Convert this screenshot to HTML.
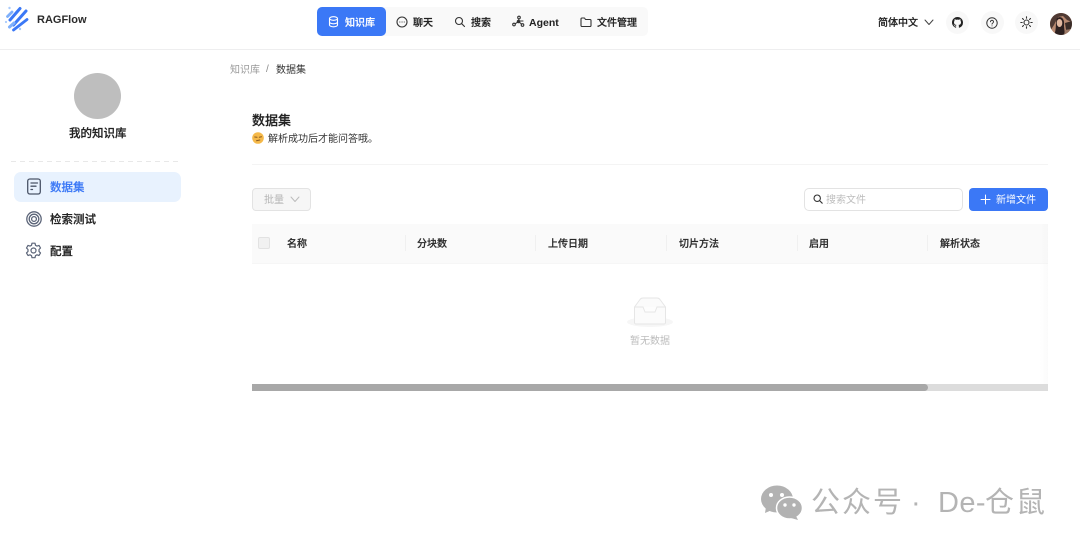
<!DOCTYPE html>
<html lang="zh"><head><meta charset="utf-8"><title>RAGFlow</title>
<style>
html,body{margin:0;padding:0;background:#fff}
#p{position:relative;width:1080px;height:547px;overflow:hidden;background:#fff;font-family:"Liberation Sans","Noto Sans CJK SC",sans-serif;color:#222}
#p div,#p span.t,#p svg{position:absolute}
.t{position:absolute;white-space:nowrap;line-height:16px}
.b{font-weight:500;-webkit-text-stroke:.2px currentColor}
.th{font-size:10px;top:237px;color:#2a2a2a;font-weight:500;-webkit-text-stroke:.2px currentColor}
.sep{width:1px;height:16px;top:235px;background:#f0f0f0}
.circ{width:23px;height:23px;border-radius:50%;background:#f8f8f8;top:11px}
.i{fill:none;stroke:#333;stroke-width:1.100;stroke-linecap:round;stroke-linejoin:round}
.w{font-size:29px;line-height:34px;color:#b4b4b4;top:486px}
</style></head><body><div id="p">

<div style="left:0;top:49px;width:1080px;height:1px;background:#eeeeef"></div>

<svg style="left:0;top:0" width="34" height="34" viewBox="0 0 34 34" fill="none" stroke-linecap="round">
<path d="M20 8.500 10 20" stroke="#3b78f6" stroke-width="3"/>
<path d="M26 11 13.500 25" stroke="#3b78f6" stroke-width="3"/>
<path d="M27 19.500 13.500 30" stroke="#3b78f6" stroke-width="2.800"/>
<path d="M14 23 9.500 27" stroke="#7fb0fb" stroke-width="3"/>
<path d="M12 12 7.500 16.500" stroke="#7fb0fb" stroke-width="2.800"/>
<circle cx="9.500" cy="8" r="1.200" fill="#a9cbfc"/><circle cx="6" cy="22" r="1.100" fill="#a9cbfc"/><circle cx="20" cy="29" r="1.200" fill="#a9cbfc"/>
</svg>
<span class="t" style="left:37px;top:12px;font-size:11px;font-weight:700;color:#2b2b2b">RAGFlow</span>

<div style="left:317px;top:7px;width:331px;height:29px;background:#f9f9f9;border-radius:5px"></div>
<div style="left:317px;top:7px;width:69px;height:29px;background:#3b78f6;border-radius:5px"></div>
<svg class="i" style="left:328px;top:16px;stroke:#fff" width="11" height="12" viewBox="0 0 11 12"><ellipse cx="5.500" cy="2.500" rx="4" ry="1.800"/><path d="M1.500 2.500v6.500c0 1 1.800 1.800 4 1.800s4-.8 4-1.800v-6.500M1.500 6c0 1 1.800 1.800 4 1.800s4-.8 4-1.800"/></svg>
<span class="t b" style="left:345px;top:14px;font-size:10px;color:#fff;margin-top:1.500px">知识库</span>
<svg class="i" style="left:396px;top:16px" width="12" height="12" viewBox="0 0 12 12"><circle cx="6" cy="6" r="5"/><path d="M3.800 6h.1M6 6h.1M8.200 6h.1"/></svg>
<span class="t b" style="left:413px;top:14px;font-size:10px;margin-top:1.500px">聊天</span>
<svg class="i" style="left:454px;top:16px" width="12" height="12" viewBox="0 0 12 12"><circle cx="5" cy="5" r="3.500"/><path d="M7.700 7.700 10.500 10.500"/></svg>
<span class="t b" style="left:471px;top:14px;font-size:10px;margin-top:1.500px">搜索</span>
<svg class="i" style="left:512px;top:15px" width="13" height="13" viewBox="0 0 13 13"><circle cx="7" cy="2.500" r="1.300"/><circle cx="2" cy="9.500" r="1.300"/><circle cx="10.500" cy="10" r="1.300"/><circle cx="6.500" cy="6.500" r="1.200" fill="#333"/><path d="M6.800 4v1.500M3.200 8.700 5.500 7.300M7.700 7.500 9.500 9M8 6h3"/></svg>
<span class="t" style="left:529px;top:15px;font-size:10.500px;font-weight:700">Agent</span>
<svg class="i" style="left:580px;top:16px" width="12" height="12" viewBox="0 0 12 12"><path d="M1 3a1 1 0 0 1 1-1h2.500l1 1.500H10a1 1 0 0 1 1 1V9.500a1 1 0 0 1-1 1H2a1 1 0 0 1-1-1z"/></svg>
<span class="t b" style="left:597px;top:14px;font-size:10px;margin-top:1.500px">文件管理</span>

<span class="t b" style="left:878px;top:16px;font-size:10px">简体中文</span>
<svg class="i" style="left:924px;top:19px;stroke:#444;stroke-width:1" width="10" height="7" viewBox="0 0 10 7"><path d="M1 1 5 5.500 9 1"/></svg>
<div class="circ" style="left:946px"></div><div class="circ" style="left:981px"></div><div class="circ" style="left:1015px"></div>
<svg style="left:952px;top:17px" width="11" height="11" viewBox="0 0 16 16"><path fill="#222" d="M8 0C3.580 0 0 3.580 0 8c0 3.540 2.290 6.530 5.470 7.590.4.070.55-.17.550-.38 0-.19-.01-.82-.01-1.490-2.010.37-2.530-.49-2.690-.94-.09-.23-.48-.94-.82-1.130-.28-.15-.68-.52-.01-.53.630-.01 1.080.58 1.230.82.720 1.210 1.870.87 2.330.66.070-.52.280-.87.510-1.070-1.780-.2-3.640-.89-3.640-3.950 0-.87.310-1.590.82-2.150-.08-.2-.36-1.020.08-2.120 0 0 .67-.21 2.200.82.640-.18 1.320-.27 2-.27s1.360.09 2 .27c1.530-1.040 2.200-.82 2.200-.82.440 1.100.16 1.920.08 2.120.51.560.82 1.270.82 2.150 0 3.070-1.870 3.750-3.650 3.950.29.250.54.730.54 1.480 0 1.070-.01 1.930-.01 2.200 0 .21.150.46.550.38A8.010 8.010 0 0 0 16 8c0-4.420-3.580-8-8-8z"/></svg>
<svg class="i" style="left:986px;top:17px;stroke-width:1" width="12" height="12" viewBox="0 0 12 12"><circle cx="6" cy="6" r="5.200"/><path d="M4.500 4.700a1.500 1.500 0 1 1 2.300 1.300c-.5.300-.8.600-.8 1.100M6 8.900h.01"/></svg>
<svg class="i" style="left:1020px;top:16px;stroke-width:1.100" width="13" height="13" viewBox="0 0 13 13"><circle cx="6.500" cy="6.500" r="2.500"/><path d="M6.500.8v1.400M6.500 10.800v1.400M.8 6.500h1.400M10.800 6.500h1.400M2.500 2.500l1 1M9.500 9.500l1 1M2.500 10.500l1-1M9.500 3.500l1-1"/></svg>
<svg style="left:1050px;top:13px" width="22" height="22" viewBox="0 0 22 22"><defs><clipPath id="c"><circle cx="11" cy="11" r="11"/></clipPath></defs><g clip-path="url(#c)"><rect width="22" height="22" fill="#b98a72"/><path d="M0 0H22V9L17 7 13 3 8 4 4 12 0 18z" fill="#4f3a34"/><path d="M7 5C12 2 15 7 14 13L15 22H4C7 16 5 9 7 5z" fill="#2d2020"/><ellipse cx="9.500" cy="10" rx="2.800" ry="4" fill="#e2b9a2"/><path d="M15 10 22 8V16L16 17z" fill="#3a2c28"/><path d="M15 17 22 16V22H14z" fill="#9c7a68"/></g></svg>

<div style="left:74px;top:73px;width:47px;height:46px;border-radius:50%;background:#bebebe"></div>
<span class="t b" style="left:69px;top:126px;font-size:11.500px">我的知识库</span>
<div style="left:11px;top:161px;width:170px;height:1px;background:repeating-linear-gradient(90deg,#e8e8e8 0 5px,transparent 5px 9px)"></div>
<div style="left:14px;top:172px;width:167px;height:30px;border-radius:7px;background:#e8f2fe"></div>
<svg class="i" style="left:26px;top:178px;stroke:#4b5568;stroke-width:1.300" width="16" height="17" viewBox="0 0 16 17"><rect x="1.700" y="1" width="12.600" height="15" rx="2.200"/><path d="M5 5h6.500M5 8.200h5M5 11.500h1.500"/></svg>
<span class="t b" style="left:50px;top:180px;font-size:11.500px;color:#3b78f6">数据集</span>
<svg class="i" style="left:26px;top:211px;stroke:#5b6478;stroke-width:1.300" width="16" height="16" viewBox="0 0 16 16"><circle cx="8" cy="8" r="7.200"/><circle cx="8" cy="8" r="4.800"/><circle cx="8" cy="8" r="2.400"/></svg>
<span class="t b" style="left:50px;top:212px;font-size:11.500px">检索测试</span>
<svg class="i" style="left:25px;top:242px;stroke:#5b6478;stroke-width:1.200" width="17" height="17" viewBox="0 0 17 17"><circle cx="8.500" cy="8.500" r="2.500"/><path d="M7 1.200h3l.5 2.100 1.500.8 2-.7 1.500 2.600-1.500 1.500v1.900l1.500 1.500-1.500 2.600-2-.7-1.500.8-.5 2.100H7l-.5-2.100-1.500-.8-2 .7-1.500-2.600L3 9.400V7.500L1.500 6 3 3.400l2 .7 1.500-.8z"/></svg>
<span class="t b" style="left:50px;top:244px;font-size:11.500px">配置</span>

<span class="t" style="left:230px;top:63px;font-size:10px;color:#9a9a9a">知识库</span>
<span class="t" style="left:266px;top:62px;font-size:10px;color:#8a8a8a">/</span>
<span class="t" style="left:276px;top:63px;font-size:10px;color:#333">数据集</span>
<span class="t b" style="left:252px;top:113px;font-size:13px;color:#222">数据集</span>
<svg style="left:252px;top:132px" width="12" height="12" viewBox="0 0 12 12"><circle cx="6" cy="6" r="5.800" fill="#f5b94a"/><path d="M2.700 5 5 5.300M7.300 5.300 9.500 4.800M4.500 8.700 7.800 8" stroke="#8a5a20" stroke-width="1" fill="none" stroke-linecap="round"/></svg>
<span class="t" style="left:268px;top:132px;font-size:10px;color:#333">解析成功后才能问答哦。</span>
<div style="left:252px;top:164px;width:796px;height:1px;background:#f4f4f4"></div>

<div style="left:252px;top:188px;width:57px;height:21px;border:1px solid #e3e3e3;border-radius:4px;background:#f6f6f6"></div>
<span class="t" style="left:264px;top:193px;font-size:10px;color:#b5b5b5">批量</span>
<svg class="i" style="left:290px;top:196px;stroke:#bcbcbc;stroke-width:1" width="10" height="7" viewBox="0 0 10 7"><path d="M1 1 5 5.500 9 1"/></svg>

<div style="left:804px;top:188px;width:157px;height:21px;border:1px solid #e3e3e3;border-radius:5px;background:#fff"></div>
<svg class="i" style="left:813px;top:194px;stroke-width:1.100" width="10" height="10" viewBox="0 0 10 10"><circle cx="4.200" cy="4.200" r="3.200"/><path d="M6.600 6.600 9.200 9.200"/></svg>
<span class="t" style="left:826px;top:193px;font-size:10px;color:#bdbdbd">搜索文件</span>
<div style="left:969px;top:188px;width:79px;height:23px;border-radius:4px;background:#3b78f6"></div>
<svg class="i" style="left:980px;top:194px;stroke:#fff;stroke-width:1" width="11" height="11" viewBox="0 0 11 11"><path d="M5.500 1v9M1 5.500h9"/></svg>
<span class="t" style="left:996px;top:193px;font-size:10px;color:#fff">新增文件</span>

<div style="left:252px;top:224px;width:796px;height:39px;background:#fafafa"></div>
<div style="left:252px;top:263px;width:796px;height:1px;background:#f6f6f6"></div>
<div style="left:1040px;top:224px;width:8px;height:160px;background:linear-gradient(90deg,rgba(240,240,240,0),rgba(240,240,240,.3))"></div>
<div style="left:258px;top:237px;width:10px;height:10px;border:1px solid #e2e2e2;border-radius:2px;background:#f1f1f1"></div>
<span class="t th" style="left:287px">名称</span><div class="sep" style="left:405px"></div>
<span class="t th" style="left:417px">分块数</span><div class="sep" style="left:535px"></div>
<span class="t th" style="left:548px">上传日期</span><div class="sep" style="left:666px"></div>
<span class="t th" style="left:679px">切片方法</span><div class="sep" style="left:797px"></div>
<span class="t th" style="left:809px">启用</span><div class="sep" style="left:927px"></div>
<span class="t th" style="left:940px">解析状态</span>

<svg style="left:626px;top:296px" width="48" height="32" viewBox="0 0 48 32"><ellipse cx="24" cy="26" rx="23" ry="5" fill="#f6f6f6"/><path d="M8.500 11 14 3.500Q15 2 17 2H31Q33 2 34 3.500L39.500 11V26.500a1.500 1.500 0 0 1-1.500 1.500H10a1.500 1.500 0 0 1-1.500-1.500z" fill="#fbfbfb" stroke="#e6e6e6"/><path d="M8.500 11H17L19 16H29L31 11H39.500" fill="#fdfdfd" stroke="#e6e6e6"/></svg>
<span class="t" style="left:630px;top:333px;font-size:10px;color:#bcbcbc;margin-top:.5px">暂无数据</span>

<div style="left:252px;top:384px;width:796px;height:7px;background:#dcdcdc"></div>
<div style="left:252px;top:384px;width:676px;height:7px;background:#a8a8a8;border-radius:0 4px 4px 0"></div>

<svg style="left:760px;top:485px" width="44" height="36" viewBox="0 0 44 36"><ellipse cx="17" cy="14" rx="16" ry="13.500" fill="#b2b2b2"/><path d="M6 22 5 28 12 25z" fill="#b2b2b2"/><ellipse cx="29.500" cy="23" rx="13" ry="11" fill="#b2b2b2" stroke="#fff" stroke-width="1.500"/><path d="M36 31 38 35 31 33z" fill="#b2b2b2"/><circle cx="11" cy="10" r="2" fill="#fff"/><circle cx="22" cy="10" r="2" fill="#fff"/><circle cx="25" cy="20" r="1.700" fill="#fff"/><circle cx="34" cy="20" r="1.700" fill="#fff"/></svg>
<span class="t w" style="left:811px;letter-spacing:2px">公众号</span>
<span class="t w" style="left:911px">·</span>
<span class="t w" style="left:938px;letter-spacing:.4px">De-</span>
<span class="t w" style="left:985px">仓</span>
<span class="t w" style="left:1016px">鼠</span>

</div></body></html>
